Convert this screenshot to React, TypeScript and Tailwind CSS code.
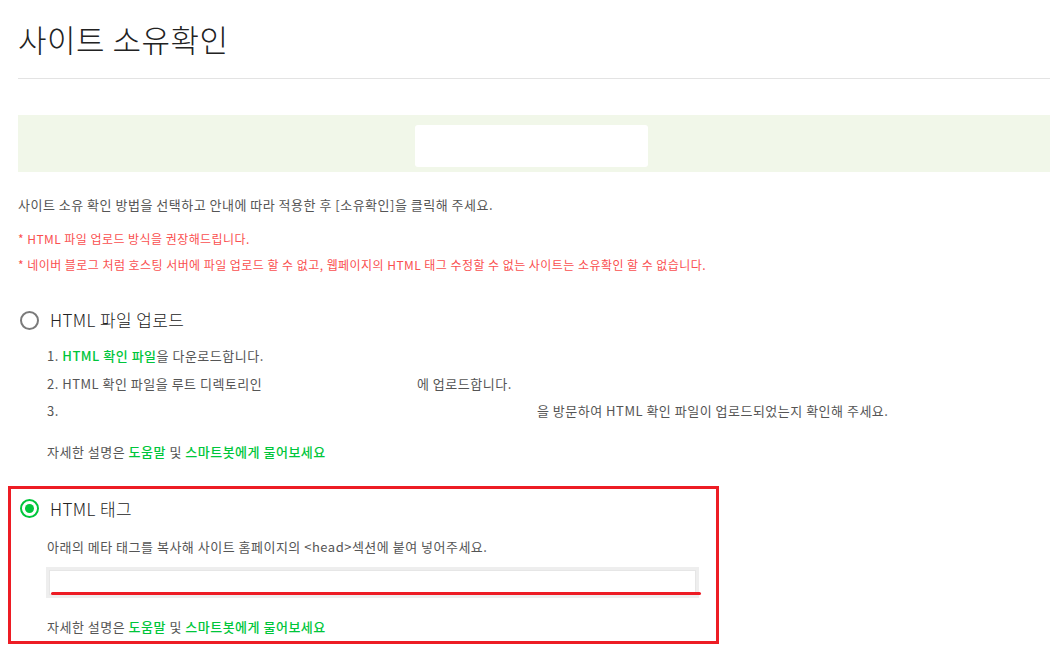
const font = { fontFamily: '"Noto Sans CJK KR", "Noto Sans", sans-serif' };

function Radio({ checked }: { checked?: boolean }) {
  return checked ? (
    <span className="ml-[2px] flex h-[19px] w-[19px] shrink-0 items-center justify-center rounded-full border-[2.5px] border-[#00c63b]">
      <span className="h-[9px] w-[9px] rounded-full bg-[#00c63b]" />
    </span>
  ) : (
    <span className="ml-[2px] h-[19px] w-[19px] shrink-0 rounded-full border-2 border-[#7a7a7a]" />
  );
}

function HelpLine({ className = "" }: { className?: string }) {
  return (
    <p className={`ml-[29px] text-[13px] leading-[20px] tracking-[0.5px] text-[#555] ${className}`}>
      자세한 설명은 <a className="font-medium text-[#00c63b]">도움말</a> 및{" "}
      <a className="font-medium text-[#00c63b]">스마트봇에게 물어보세요</a>
    </p>
  );
}

export default function App() {
  return (
    <div className="min-h-[655px] bg-white pl-[18px] pr-[12px]" style={font}>
      <h1 className="pt-[20px] text-[31px] font-light leading-[38px] tracking-[0.5px] text-[#222]">
        사이트 소유확인
      </h1>
      <div className="mt-[20px] h-px bg-[#e3e3e3]" />

      <div className="mt-[36px] flex h-[57px] justify-center bg-[#f1f7e9] pr-[6px] pt-[10px]">
        <div className="h-[42px] w-[233px] rounded-[3px] bg-white" />
      </div>

      <p className="mt-[23px] text-[13px] leading-[20px] tracking-[0.5px] text-[#555]">
        사이트 소유 확인 방법을 선택하고 안내에 따라 적용한 후 [소유확인]을 클릭해 주세요.
      </p>
      <p className="mt-[14px] text-[12px] leading-[20px] tracking-[0.45px] text-[#fa5050]">
        * HTML 파일 업로드 방식을 권장해드립니다.
      </p>
      <p className="mt-[6px] text-[12px] leading-[20px] tracking-[0.45px] text-[#fa5050]">
        * 네이버 블로그 처럼 호스팅 서버에 파일 업로드 할 수 없고, 웹페이지의 HTML 태그 수정할 수 없는 사이트는 소유확인 할 수 없습니다.
      </p>

      <label className="mt-[33px] flex h-[24px] items-center gap-[11px]">
        <Radio />
        <span className="text-[17px] font-light leading-[24px] tracking-[0.4px] text-[#222]">HTML 파일 업로드</span>
      </label>
      <ol className="ml-[29px] mt-[10px] text-[13px] leading-[27.5px] tracking-[0.5px] text-[#555]">
        <li>
          1. <a className="font-medium text-[#00c63b]">HTML 확인 파일</a>을 다운로드합니다.
        </li>
        <li className="flex">
          <span className="w-[370px] shrink-0">2. HTML 확인 파일을 루트 디렉토리인</span>
          <span>에 업로드합니다.</span>
        </li>
        <li className="flex">
          <span className="w-[490px] shrink-0">3.</span>
          <span>을 방문하여 HTML 확인 파일이 업로드되었는지 확인해 주세요.</span>
        </li>
      </ol>
      <HelpLine className="mt-[17px]" />

      <div className="ml-[-10px] mt-[24px] w-[711px] border-[3px] border-[#ed1c24] pb-[4px] pl-[7px] pt-[8px]">
        <label className="flex h-[24px] items-center gap-[11px]">
          <Radio checked />
          <span className="text-[17px] font-light leading-[24px] tracking-[0.4px] text-[#222]">HTML 태그</span>
        </label>
        <p className="ml-[29px] mt-[16px] text-[13px] leading-[20px] tracking-[0.5px] text-[#555]">
          아래의 메타 태그를 복사해 사이트 홈페이지의 &lt;head&gt;섹션에 붙여 넣어주세요.
        </p>
        <div className="relative ml-[28px] mt-[10px] h-[31px] w-[653px] border-[3px] border-[#eeeeee] bg-white">
          <div className="h-full w-full border border-[#e6e6e6]" />
          <div className="absolute bottom-0 left-[2px] h-[3px] w-[650px] rounded-full bg-[#ed1c24]" />
        </div>
        <HelpLine className="mt-[19px]" />
      </div>
    </div>
  );
}
